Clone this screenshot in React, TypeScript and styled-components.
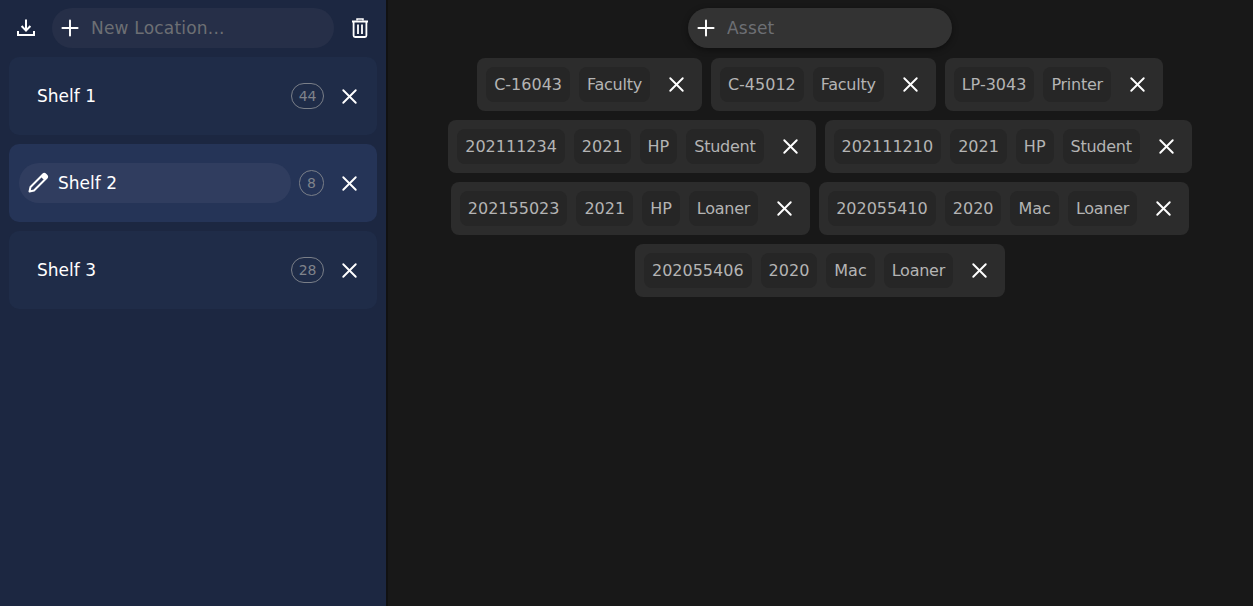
import * as React from 'react';
import styled, { createGlobalStyle } from 'styled-components';
import { Plus, X } from 'lucide-react';

const shelves = [
  { name: 'Shelf 1', count: 44 },
  { name: 'Shelf 2', count: 8, active: true },
  { name: 'Shelf 3', count: 28 },
];

const assets = [
  ['C-16043', 'Faculty'],
  ['C-45012', 'Faculty'],
  ['LP-3043', 'Printer'],
  ['202111234', '2021', 'HP', 'Student'],
  ['202111210', '2021', 'HP', 'Student'],
  ['202155023', '2021', 'HP', 'Loaner'],
  ['202055410', '2020', 'Mac', 'Loaner'],
  ['202055406', '2020', 'Mac', 'Loaner'],
];

const narrowWords = ['Faculty', 'Student', 'Printer', 'Loaner'];

const DownloadIcon = () => (
  <svg width="20" height="20" viewBox="0 0 20 20" fill="none" stroke="#fff" strokeWidth="2">
    <path d="M10 1.5V12" />
    <path d="M5.6 8l4.4 4.6L14.4 8" />
    <path d="M2 13v4h16v-4" />
  </svg>
);

const TrashIcon = () => (
  <svg width="18" height="20" viewBox="0 0 18 20" fill="none" stroke="#fff">
    <path d="M1 3.5h16" strokeWidth="2" />
    <path d="M6 2.5V1h6v1.5" strokeWidth="1.5" />
    <path d="M2.6 4v13.5a1.5 1.5 0 0 0 1.5 1.5h9.8a1.5 1.5 0 0 0 1.5-1.5V4" strokeWidth="1.8" />
    <path d="M7 6.5v9.5M11 6.5v9.5" strokeWidth="1.8" />
  </svg>
);

const PencilIcon = () => (
  <svg width="22" height="22" viewBox="0 0 22 22" fill="none" stroke="#fff" strokeWidth="2" strokeLinejoin="round">
    <path d="M2.5 19.5l1-4.5L14.5 4l3.5 3.500L7 18.500z" />
    <path d="M16 2.500a1.800 1.800 0 0 1 2.500 0l1 1a1.800 1.800 0 0 1 0 2.500l-1 1-3.500-3.500z" fill="#fff" />
  </svg>
);

export default function App() {
  return (
    <Page>
      <GlobalStyle />
      <Sidebar>
        <TopBar>
          <IconButton><DownloadIcon /></IconButton>
          <LocationField>
            <Plus size={26} color="#fff" strokeWidth={1.8} />
            <FieldInput placeholder="New Location..." />
          </LocationField>
          <IconButton><TrashIcon /></IconButton>
        </TopBar>
        {shelves.map((s) => (
          <ShelfRow key={s.name} $active={s.active}>
            <ShelfName $active={s.active}>
              {s.active && <PencilIcon />}
              {s.name}
            </ShelfName>
            <Count>{s.count}</Count>
            <RemoveButton><X size={25} strokeWidth={1.8} /></RemoveButton>
          </ShelfRow>
        ))}
      </Sidebar>
      <Main>
        <AssetField>
          <Plus size={26} color="#fff" strokeWidth={1.8} />
          <FieldInput placeholder="Asset" />
        </AssetField>
        <AssetList>
          {assets.map((tags) => (
            <AssetCard key={tags[0]}>
              {tags.map((t) => (
                <Tag key={t} $narrow={narrowWords.includes(t)}>{t}</Tag>
              ))}
              <CardRemove><X size={25} strokeWidth={1.8} /></CardRemove>
            </AssetCard>
          ))}
        </AssetList>
      </Main>
    </Page>
  );
}

const GlobalStyle = createGlobalStyle`
  html, body { margin: 0; height: 100%; background: #181818; }
  #root { height: 100%; }
  * { box-sizing: border-box; }
  body { font-family: "DejaVu Sans", sans-serif; font-size: 16px; }
`;
const Page = styled.div`
  display: flex;
  height: 606px;
  overflow: hidden;
`;
const Sidebar = styled.aside`
  width: 388px;
  flex: none;
  background: #1c2741;
  border-right: 2px solid #111111;
  padding: 8px 9px;
  display: flex;
  flex-direction: column;
  gap: 9px;
`;
const TopBar = styled.div`
  display: flex;
  align-items: center;
  height: 40px;
  gap: 9px;
`;
const IconButton = styled.div`
  width: 34px;
  flex: none;
  display: flex;
  justify-content: center;
  color: #fff;
`;
const LocationField = styled.div`
  flex: 1;
  height: 40px;
  border-radius: 20px;
  background: #262f48;
  display: flex;
  align-items: center;
  gap: 8px;
  padding-left: 5px;
`;
const FieldInput = styled.input`
  flex: 1;
  min-width: 0;
  background: transparent;
  border: 0;
  outline: 0;
  padding: 0;
  font: inherit;
  font-size: 17px;
  letter-spacing: 0.2px;
  color: #fff;
  &::placeholder { color: #6d6f74; opacity: 1; }
`;
const ShelfRow = styled.div<{ $active?: boolean }>`
  height: 78px;
  border-radius: 10px;
  background: ${(p) => (p.$active ? '#253457' : '#1f2c48')};
  display: flex;
  align-items: center;
  padding: 0 15px 0 10px;
`;
const ShelfName = styled.div<{ $active?: boolean }>`
  flex: 1;
  height: 40px;
  border-radius: 20px;
  display: flex;
  align-items: center;
  gap: 9px;
  color: #fff;
  font-size: 17px;
  padding-left: ${(p) => (p.$active ? '8px' : '18px')};
  background: ${(p) => (p.$active ? '#303d5f' : 'transparent')};
`;
const Count = styled.div`
  min-width: 25px;
  height: 26px;
  padding: 0 6.5px;
  margin: 0 13px 0 8px;
  border: 1px solid #7a7f88;
  border-radius: 13px;
  display: flex;
  align-items: center;
  justify-content: center;
  font-size: 14px;
  color: #7f838b;
`;
const RemoveButton = styled.div`
  display: flex;
  color: #fff;
`;
const Main = styled.main`
  flex: 1;
  padding: 8px 10px 8px 9px;
  display: flex;
  flex-direction: column;
  align-items: center;
  gap: 10px;
`;
const AssetField = styled.div`
  width: 264px;
  height: 40px;
  border-radius: 20px;
  background: #333333;
  box-shadow: 0 2px 6px rgba(0, 0, 0, 0.4);
  display: flex;
  align-items: center;
  gap: 8px;
  padding-left: 5px;
`;
const AssetList = styled.div`
  display: flex;
  flex-wrap: wrap;
  justify-content: center;
  gap: 9px;
`;
const AssetCard = styled.div`
  height: 53px;
  background: #2c2c2c;
  border-radius: 8px;
  display: flex;
  align-items: center;
  gap: 9px;
  padding: 0 13px 0 9px;
`;
const Tag = styled.div<{ $narrow?: boolean }>`
  height: 35px;
  padding: 0 8px;
  border-radius: 8px;
  background: #262626;
  display: flex;
  align-items: center;
  color: #b4b4b4;
  font-size: 16px;
  letter-spacing: ${(p) => (p.$narrow ? '-0.25px' : '0')};
`;
const CardRemove = styled.div`
  display: flex;
  color: #fff;
  margin-left: 5px;
`;
